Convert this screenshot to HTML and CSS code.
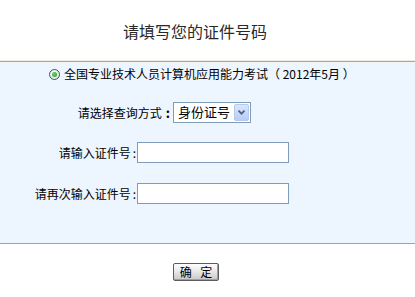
FILE: index.html
```html
<!DOCTYPE html>
<html lang="zh-CN">
<head>
<meta charset="utf-8">
<link rel="stylesheet" href="styles.css">
</head>
<body>
<div class="title">请填写您的证件号码</div>
<div class="panel">
  <div class="exam-row">
    <span class="radio"><span class="dot"></span></span>
    <span class="exam-text">全国专业技术人员计算机应用能力考试（ 2012年5月 ）</span>
  </div>
  <div class="type-row">
    <span class="type-label">请选择查询方式<b class="colon">:</b></span>
    <div class="select">
      <span class="select-text">身份证号</span>
      <span class="select-arrow">
        <svg width="15" height="16" viewBox="0 0 15 16"><path d="M4 6.5 L7.5 10 L11 6.5" fill="none" stroke="#4d6185" stroke-width="2"/></svg>
      </span>
    </div>
  </div>
  <div class="field-row">
    <span class="field-label">请输入证件号<span class="sep">:</span></span>
    <input class="field-input" type="text">
  </div>
  <div class="field-row">
    <span class="field-label">请再次输入证件号<span class="sep">:</span></span>
    <input class="field-input" type="text">
  </div>
</div>
<div class="actions">
  <button class="ok-btn" type="button">确 定</button>
</div>
</body>
</html>
```
FILE: styles.css
```css
html, body {
  margin: 0;
  padding: 0;
  background: #ffffff;
}
body {
  font-family: "Noto Sans CJK SC", "Liberation Sans", sans-serif;
  font-size: 12px;
  color: #000;
}
.title {
  height: 60px;
  line-height: 62px;
  font-size: 16px;
  color: #2a2a2a;
  text-align: center;
  padding-right: 25px;
}
.panel {
  background: #edf5fe;
  border-top: 1px solid #efedd9;
  box-shadow: inset 0 1px 0 #aaa996;
  border-bottom: 1px solid #a6a592;
  padding: 2px 0 39px 0;
  height: 141px;
}
.exam-row {
  display: flex;
  align-items: center;
  height: 20px;
  padding-left: 49px;
  margin-top: 1px;
}
.radio {
  width: 9px;
  height: 9px;
  border: 1px solid #1e5b8e;
  border-radius: 50%;
  background: radial-gradient(circle at 40% 40%, #ffffff, #dcdcd4);
  display: flex;
  align-items: center;
  justify-content: center;
  margin-right: 4px;
}
.dot {
  width: 5px;
  height: 5px;
  border-radius: 50%;
  background: radial-gradient(circle at 40% 40%, #6ed36e, #1f9a1f);
}
.exam-text {
  line-height: 20px;
  white-space: nowrap;
}
.type-row {
  display: flex;
  align-items: center;
  margin-top: 18px;
  padding-left: 77px;
  height: 20px;
}
.type-label {
  width: 96px;
  white-space: nowrap;
  text-align: right;
}
.colon {
  font-weight: bold;
  font-size: 13px;
  margin-left: 4px;
  margin-right: 3px;
}
.select {
  box-sizing: border-box;
  width: 78px;
  height: 21px;
  border: 1px solid #7f9db9;
  background: #fff;
  display: flex;
  align-items: center;
  justify-content: space-between;
  padding: 0 1px 0 4px;
}
.select-text {
  font-size: 13px;
  line-height: 18px;
}
.select-arrow {
  width: 15px;
  height: 17px;
  border-radius: 2px;
  background: linear-gradient(#d9e6fb, #b8cdf4);
  border: 1px solid #b6c8ef;
  box-sizing: border-box;
  display: flex;
  align-items: center;
  justify-content: center;
}
.field-row {
  display: grid;
  grid-template-columns: 137px auto;
  align-items: center;
  margin-top: 20px;
  height: 21px;
}
.field-label {
  text-align: right;
  white-space: nowrap;
}
.sep {
  margin-left: 2px;
  margin-right: 1px;
}
.field-input {
  box-sizing: border-box;
  width: 152px;
  height: 21px;
  margin: 0;
  border: 1px solid #7f9db9;
  background: #fff;
  padding: 0 2px;
  font-family: inherit;
}
.actions {
  display: flex;
  justify-content: center;
  padding-right: 23px;
  padding-top: 19px;
}
.ok-btn {
  box-sizing: border-box;
  width: 46px;
  height: 18px;
  padding: 0 0 0 3px;
  margin: 0;
  border: 1px solid #5c5c5c;
  border-radius: 2px;
  background: linear-gradient(#ffffff, #e6e6e6 50%, #c8c8c8);
  box-shadow: inset -1px -1px 0 #a0a0a0;
  font-family: inherit;
  font-size: 12px;
  line-height: 16px;
  color: #000;
  letter-spacing: 3px;
}
```
